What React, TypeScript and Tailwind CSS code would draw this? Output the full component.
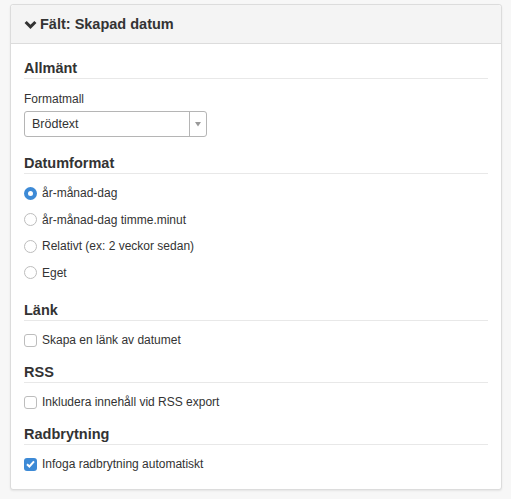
const font = { fontFamily: '"Liberation Sans", Arial, sans-serif' };

const Section = ({ title, children }: { title: string; children: React.ReactNode }) => (
  <div>
    <h3 className="text-[14.5px] font-bold leading-[16px] text-[#333] border-b border-[#e8e8e8] pb-[2px]">{title}</h3>
    {children}
  </div>
);

const Radio = ({ label, checked }: { label: string; checked?: boolean }) => (
  <label className="flex items-center h-[26.5px] gap-[5px]">
    {checked ? (
      <span className="w-[13px] h-[13px] rounded-full bg-[#3d8ad6] flex items-center justify-center">
        <span className="w-[5px] h-[5px] rounded-full bg-white" />
      </span>
    ) : (
      <span className="w-[13px] h-[13px] rounded-full border border-[#bdbdbd] bg-white" />
    )}
    <span>{label}</span>
  </label>
);

const Check = ({ label, checked }: { label: string; checked?: boolean }) => (
  <label className="flex items-center h-[20px] gap-[5px] mt-[9px]">
    {checked ? (
      <span className="w-[13px] h-[13px] rounded-[3px] bg-[#3d8ad6] flex items-center justify-center">
        <svg width="9" height="8" viewBox="0 0 9 8">
          <path d="M1 4.2 L3.4 6.5 L8 1.3" stroke="white" strokeWidth="2" fill="none" />
        </svg>
      </span>
    ) : (
      <span className="w-[13px] h-[13px] rounded-[3px] border border-[#bdbdbd] bg-white" />
    )}
    <span>{label}</span>
  </label>
);

export default function App() {
  return (
    <div className="w-[511px] h-[499px] bg-[#f7f7f7] pt-[4px] pl-[10px] pr-[9px] text-[12px] text-[#333]" style={font}>
      <div className="bg-white border border-[#dcdcdc] rounded-[3px] shadow-[0_1px_2px_rgba(0,0,0,0.08)] h-[486px]">
        <div className="h-[39px] bg-[#f4f4f4] border-b border-[#dcdcdc] flex items-center pl-[13px] gap-[3px] rounded-t-[3px] pt-[1px]">
          <svg width="13" height="10" viewBox="0 0 13 10">
            <path d="M1.6 2 L6.5 6.9 L11.4 2" stroke="#333" strokeWidth="3" fill="none" />
          </svg>
          <span className="text-[14.5px] font-bold">Fält: Skapad datum</span>
        </div>
        <div className="px-[13px] pt-[16px]">
          <Section title="Allmänt">
            <div className="mt-[13px] leading-[14px]">Formatmall</div>
            <div className="mt-[5px] w-[183px] h-[26px] border border-[#b5b5b5] rounded-[3px] flex items-center">
              <span className="flex-1 pl-[7px] text-[12.5px]">Brödtext</span>
              <span className="w-[17px] h-full border-l border-[#b5b5b5] flex items-center justify-center">
                <svg width="6" height="5" viewBox="0 0 6 5">
                  <path d="M0 0 H6 L3 4.5 Z" fill="#999" />
                </svg>
              </span>
            </div>
          </Section>
          <div className="mt-[18px]">
            <Section title="Datumformat">
              <div className="mt-[6px]">
                <Radio label="år-månad-dag" checked />
                <Radio label="år-månad-dag timme.minut" />
                <Radio label="Relativt (ex: 2 veckor sedan)" />
                <Radio label="Eget" />
              </div>
            </Section>
          </div>
          <div className="mt-[16px]">
            <Section title="Länk">
              <Check label="Skapa en länk av datumet" />
            </Section>
          </div>
          <div className="mt-[14px]">
            <Section title="RSS">
              <Check label="Inkludera innehåll vid RSS export" />
            </Section>
          </div>
          <div className="mt-[14px]">
            <Section title="Radbrytning">
              <Check label="Infoga radbrytning automatiskt" checked />
            </Section>
          </div>
        </div>
      </div>
    </div>
  );
}
